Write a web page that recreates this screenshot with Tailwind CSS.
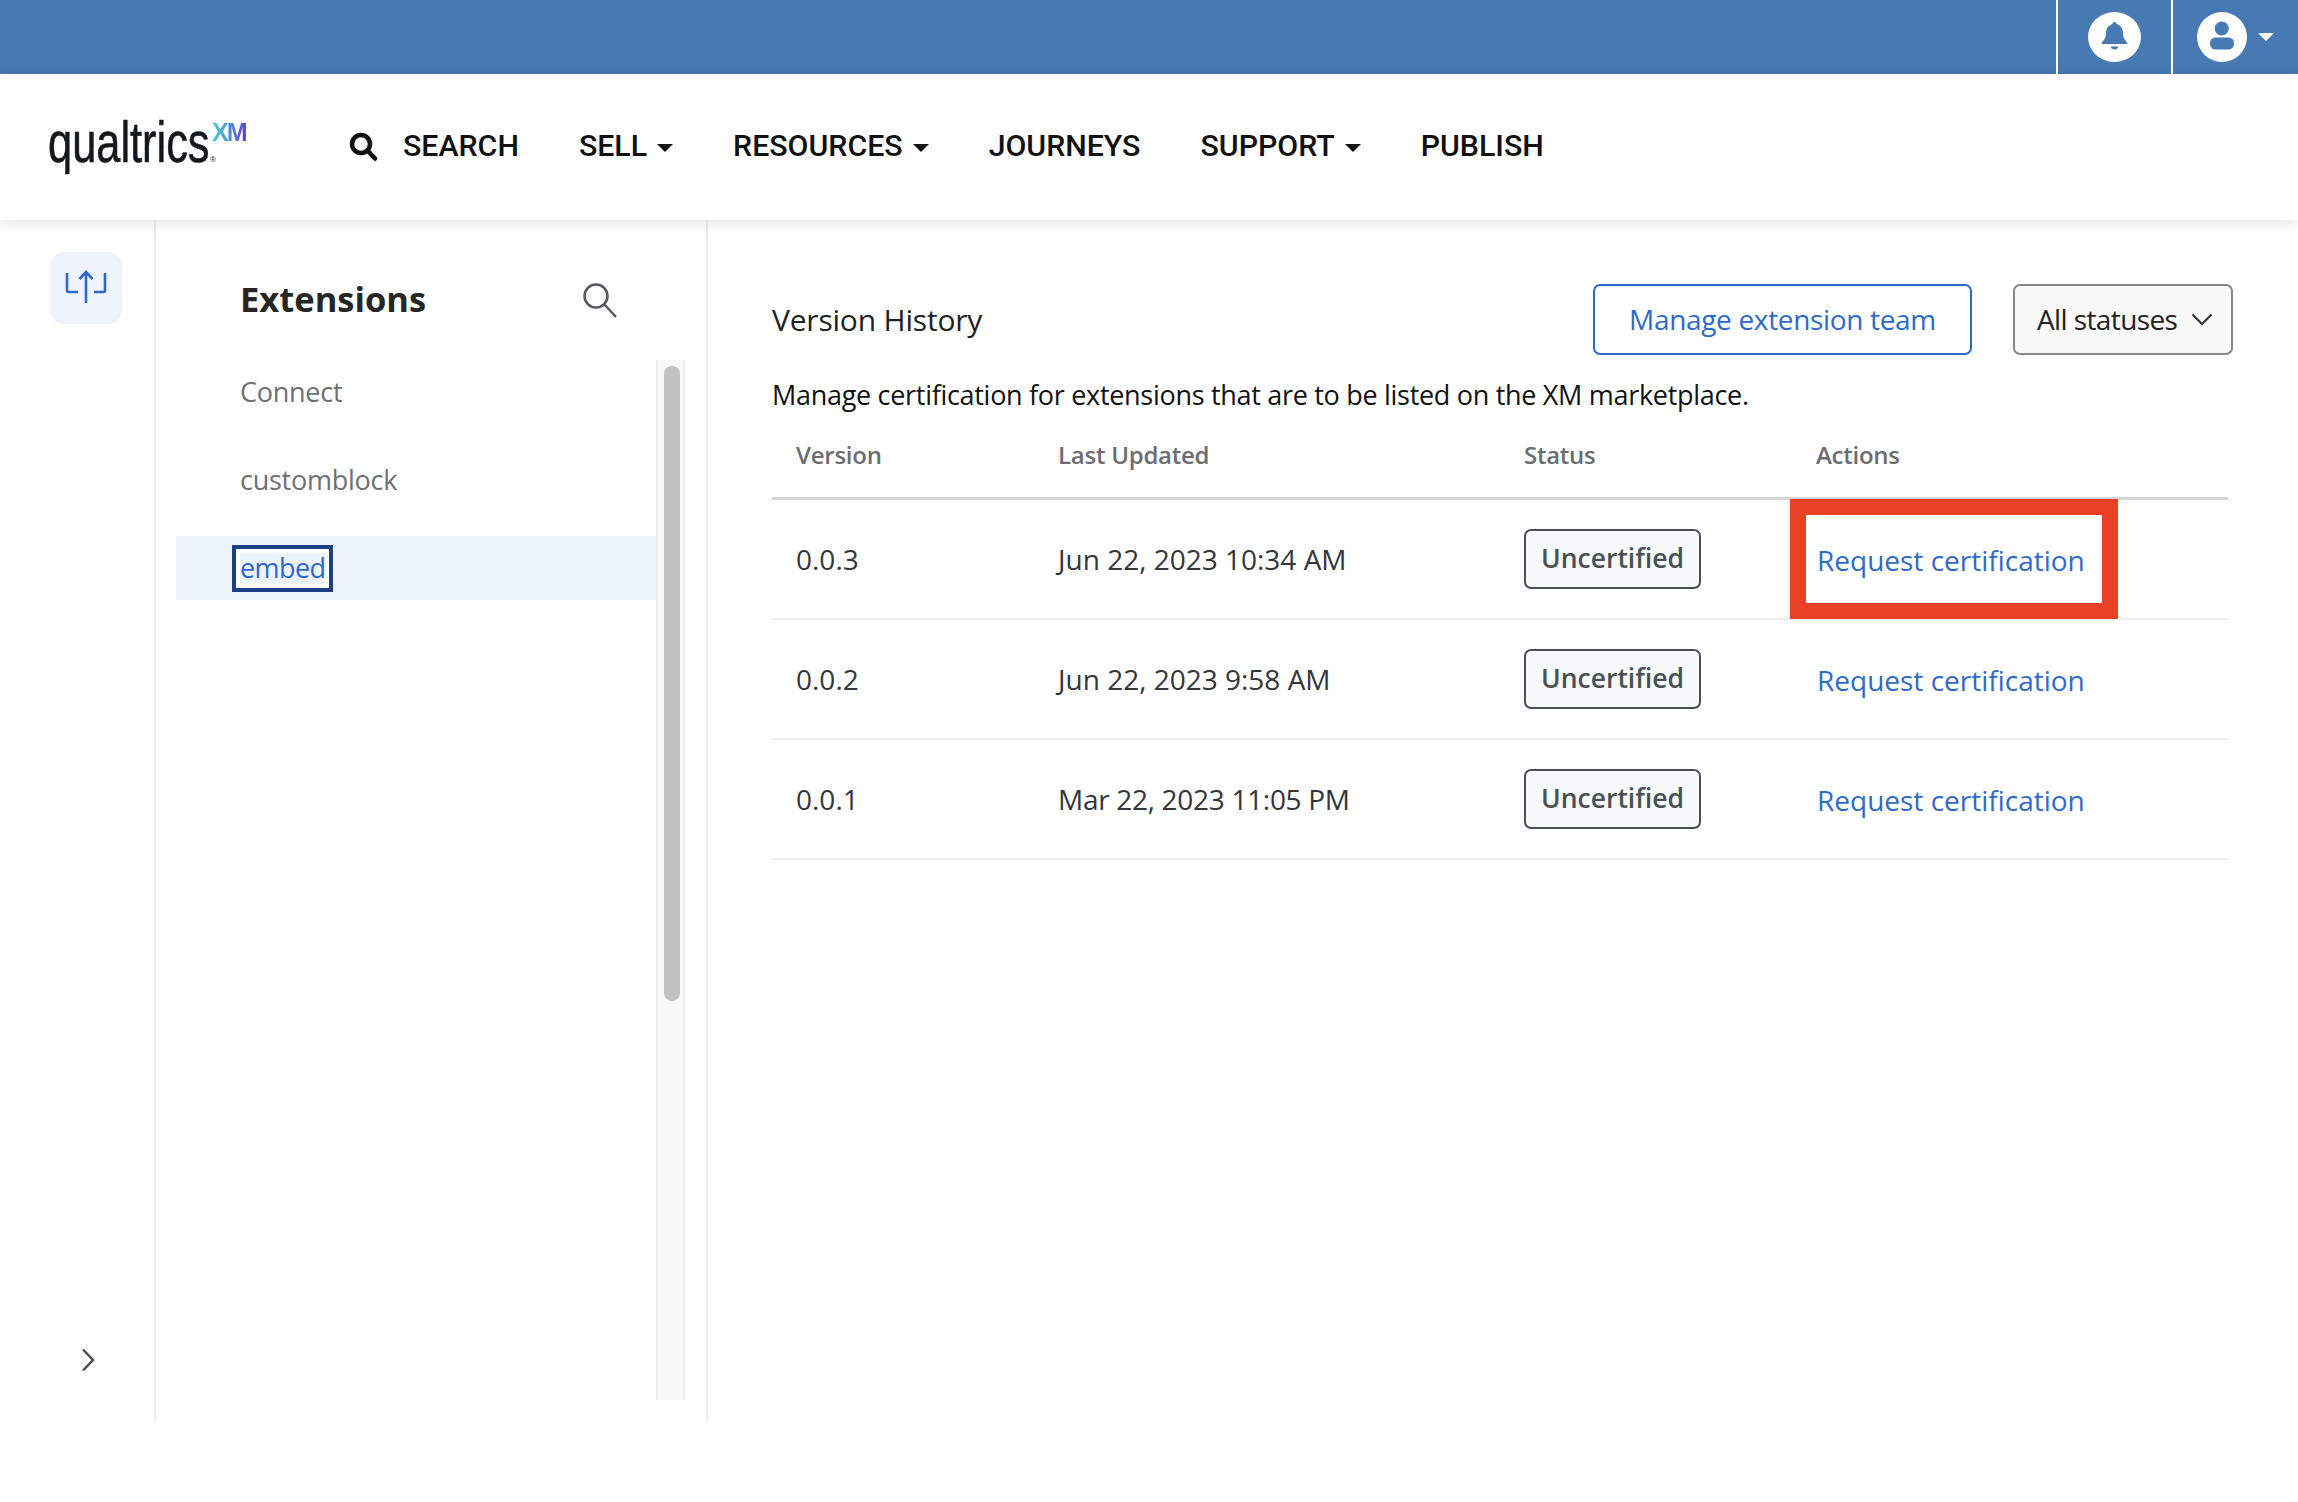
<!DOCTYPE html>
<html lang="en">
<head>
  <meta charset="UTF-8">
  <title>Extensions - Version History</title>
  <script src="https://cdn.jsdelivr.net/npm/@tailwindcss/browser@4"></script>
</head>
<body class="bg-white font-['Open_Sans',sans-serif] text-[#222]">
  <div class="w-[2298px] h-[1502px] flex flex-col overflow-hidden">
    <!-- top bar -->
    <div class="h-[74px] shrink-0 bg-[#4779b3] flex justify-end">
      <div class="w-[115px] border-l-2 border-white flex items-center justify-center">
        <svg class="w-[53px] h-[50px]" viewBox="0 0 53 50"><ellipse cx="26.5" cy="25" rx="26.5" ry="25" fill="#fff"/><path fill="#4779b3" d="M26.5 10c1.3 0 2 .8 2.2 2C33 13.5 35 17 35 21c0 4.5 1.500 7 4 9.500.6.8 0 1.500-1 1.500H15c-1 0-1.600-.7-1-1.500C16.500 28 18 25.500 18 21c0-4 2-7.500 6.300-9 .2-1.200.9-2 2.200-2z"/><path fill="#4779b3" d="M23 34.500h7a3.500 3 0 0 1-7 0z"/></svg>
      </div>
      <div class="w-[127px] border-l-2 border-white flex items-center pl-6 gap-[11px]">
        <svg class="w-[50px] h-[50px]" viewBox="0 0 50 50"><circle cx="25" cy="25" r="25" fill="#fff"/><circle cx="24.700" cy="16.500" r="7" fill="#4779b3"/><rect x="13" y="25.500" width="24" height="12" rx="5.500" fill="#4779b3"/></svg>
        <div class="w-0 h-0 border-x-8 border-x-transparent border-t-8 border-t-white"></div>
      </div>
    </div>

    <!-- main nav -->
    <div class="relative z-10 h-[146px] shrink-0 bg-white shadow-[0_2px_14px_rgba(0,0,0,0.12)] flex items-center font-['Roboto',sans-serif] font-medium text-[30.3px] text-[#111]">
      <div class="w-[349px] pl-[48px] flex items-start -mt-[10px]">
        <div class="relative w-[164px] h-[60px]">
          <span class="absolute left-0 top-0 font-['Liberation_Sans',sans-serif] text-[58px] leading-[60px] text-[#15181b] origin-left scale-x-[0.748] whitespace-nowrap [-webkit-text-stroke:0.6px_#15181b]">qualtrics</span>
          <span class="absolute left-[162px] top-[43px] font-['Liberation_Sans',sans-serif] text-[8px] leading-[10px] text-[#15181b]">®</span>
        </div>
        <span class="font-['Liberation_Sans',sans-serif] font-bold text-[25px] leading-[24px] mt-[8px] tracking-[-2px] bg-linear-to-r from-[#3fd6d4] to-[#5a37d6] bg-clip-text text-transparent">XM</span>
      </div>
      <div class="flex items-center gap-[60px] pb-[2px]">
        <div class="flex items-center gap-[25px]">
          <svg class="w-[29px] h-[29px]" viewBox="0 0 29 29" fill="none" stroke="#111" stroke-width="4.500"><circle cx="12" cy="12" r="9"/><path stroke-linecap="round" d="M18.500 18.500 26 26.500"/></svg>
          <span>SEARCH</span>
        </div>
        <div class="flex items-center gap-[10px]"><span>SELL</span><div class="w-0 h-0 border-x-8 border-x-transparent border-t-8 border-t-[#111] mt-1"></div></div>
        <div class="flex items-center gap-[10px]"><span>RESOURCES</span><div class="w-0 h-0 border-x-8 border-x-transparent border-t-8 border-t-[#111] mt-1"></div></div>
        <span>JOURNEYS</span>
        <div class="flex items-center gap-[10px]"><span>SUPPORT</span><div class="w-0 h-0 border-x-8 border-x-transparent border-t-8 border-t-[#111] mt-1"></div></div>
        <span>PUBLISH</span>
      </div>
    </div>

    <div class="h-[1200px] shrink-0 flex">
      <!-- icon rail -->
      <div class="w-[156px] shrink-0 border-r-2 border-[#ececec] flex flex-col items-start pl-[50px] pt-[32px] pb-[48px] justify-between">
        <div class="w-[72px] h-[72px] rounded-[14px] bg-[#eef3fc] flex items-center justify-center">
          <svg class="w-[72px] h-[72px]" viewBox="0 0 72 72" fill="none" stroke="#2d6acb" stroke-width="2.600"><path d="M17 21v17.500a1.500 1.500 0 0 0 1.500 1.500h9.500M55 21v17.500a1.500 1.500 0 0 1-1.500 1.500H44M36 20v31M29.500 27l6.500-7 6.500 7"/></svg>
        </div>
        <svg class="w-[14px] h-[24px] ml-[31px]" viewBox="0 0 14 24" fill="none" stroke="#4a4d52" stroke-width="2.500"><path d="M2 1.500 12 12 2 22.500"/></svg>
      </div>

      <!-- extensions list -->
      <div class="w-[552px] shrink-0 border-r-2 border-[#ececec] flex flex-col pl-5">
        <div class="h-[140px] shrink-0 flex items-start justify-between pl-[64px] pr-[88px] pt-[56px]">
          <h2 class="font-bold text-[34.5px] leading-[46px] text-[#262626]">Extensions</h2>
          <svg class="w-[36px] h-[36px] mt-[6px]" viewBox="0 0 36 36" fill="none" stroke="#55585c" stroke-width="2.500"><circle cx="14" cy="14" r="11.500"/><path d="M22.500 22.500 34 35"/></svg>
        </div>
        <div class="h-[1040px] flex">
          <div class="w-[480px] flex flex-col gap-[24px] text-[27px] tracking-[-0.25px] text-[#6f7073]">
            <div class="h-[64px] flex items-center pl-[64px]">Connect</div>
            <div class="h-[64px] flex items-center pl-[64px]">customblock</div>
            <div class="h-[64px] flex items-center pl-[56px] bg-[#edf3fb]">
              <span class="h-[47px] border-[4px] border-[#1c3f85] bg-white px-[4px] py-[4px] flex"><span class="bg-[#edf3fb] text-[#2d6acb] leading-[29px] tracking-[-0.6px]">embed</span></span>
            </div>
          </div>
          <div class="w-[29px] border-x-2 border-[#ececec] bg-[#f9f9f9] pl-[6px] pt-[6px]">
            <div class="w-[16px] h-[635px] rounded-full bg-[#c1c1c1]"></div>
          </div>
        </div>
      </div>

      <!-- version history -->
      <div class="flex-1 pl-[64px] pt-[64px]">
        <div class="w-[1461px] flex items-center h-[71px]">
          <h1 class="text-[30px] tracking-[-0.2px] text-[#222] flex-1">Version History</h1>
          <button class="h-[71px] w-[379px] pb-[2px] rounded-[7px] border-2 border-[#2d6acb] text-[#2d6acb] text-[28px] tracking-[-0.33px]">Manage extension team</button>
          <div class="ml-[41px] h-[71px] w-[220px] pb-[2px] rounded-[7px] border-2 border-[#888] bg-[#f9f9f9] flex items-center pl-[22px] gap-[14px] text-[28px] tracking-[-0.6px]">
            <span>All statuses</span>
            <svg class="w-[22px] h-[13px] mt-[2px]" viewBox="0 0 22 13" fill="none" stroke="#333" stroke-width="2"><path d="M1.500 1.500 11 11l9.500-9.500"/></svg>
          </div>
        </div>
        <p class="mt-[22px] text-[27px] leading-[36px] tracking-[-0.3px] text-[#111]">Manage certification for extensions that are to be listed on the XM marketplace.</p>
        <div class="w-[1456px] mt-[3px] text-[28px] text-[#33363b]">
          <div class="grid grid-cols-[263px_466px_291px_436px] h-[84px] items-center border-b-[3px] border-[#d6d6d6] pb-[3px] text-[24px] font-semibold tracking-[-0.25px] text-[#6b6d72]">
            <div class="pl-[24px]">Version</div><div class="pl-[23px]">Last Updated</div><div class="pl-[23px]">Status</div><div class="pl-[24px]">Actions</div>
          </div>
          <div class="relative">
            <div class="absolute left-[1018px] -top-[1px] w-[328px] h-[120px] border-[16px] border-[#ea4025]"></div>
            <div class="grid grid-cols-[263px_466px_291px_436px] h-[120px] items-center border-b-2 border-[#eeeeee]">
              <div class="pl-[24px]">0.0.3</div><div class="pl-[23px]">Jun 22, 2023 10:34 AM</div>
              <div class="pl-[23px]"><span class="inline-flex h-[60px] w-[177px] items-center justify-center rounded-[7px] border-2 border-[#4a5056] bg-[#f8f9fb] text-[26.5px] font-semibold text-[#4a5056]">Uncertified</span></div>
              <div class="pl-[25px] pt-[2px] text-[#2d6acb]">Request certification</div>
            </div>
            <div class="grid grid-cols-[263px_466px_291px_436px] h-[120px] items-center border-b-2 border-[#eeeeee]">
              <div class="pl-[24px]">0.0.2</div><div class="pl-[23px]">Jun 22, 2023 9:58 AM</div>
              <div class="pl-[23px]"><span class="inline-flex h-[60px] w-[177px] items-center justify-center rounded-[7px] border-2 border-[#4a5056] bg-[#f8f9fb] text-[26.5px] font-semibold text-[#4a5056]">Uncertified</span></div>
              <div class="pl-[25px] pt-[2px] text-[#2d6acb]">Request certification</div>
            </div>
            <div class="grid grid-cols-[263px_466px_291px_436px] h-[120px] items-center border-b-2 border-[#eeeeee]">
              <div class="pl-[24px]">0.0.1</div><div class="pl-[23px] tracking-[-0.3px]">Mar 22, 2023 11:05 PM</div>
              <div class="pl-[23px]"><span class="inline-flex h-[60px] w-[177px] items-center justify-center rounded-[7px] border-2 border-[#4a5056] bg-[#f8f9fb] text-[26.5px] font-semibold text-[#4a5056]">Uncertified</span></div>
              <div class="pl-[25px] pt-[2px] text-[#2d6acb]">Request certification</div>
            </div>
          </div>
        </div>
      </div>
    </div>
  </div>
</body>
</html>
